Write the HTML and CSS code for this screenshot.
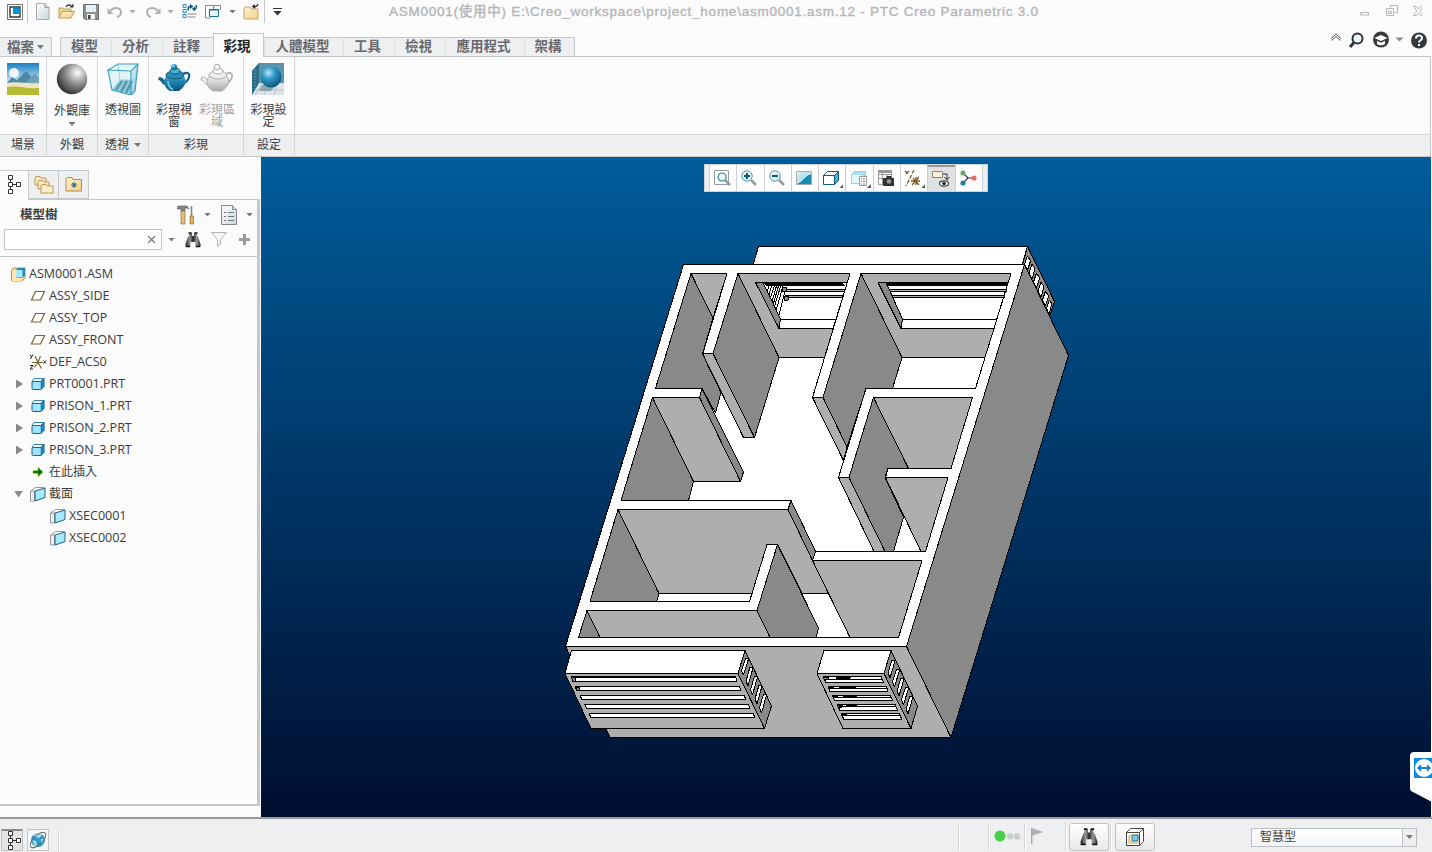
FILE: index.html
```html
<!DOCTYPE html>
<html lang="zh-Hant">
<head>
<meta charset="utf-8">
<title>ASM0001 - PTC Creo Parametric 3.0</title>
<link rel="stylesheet" href="styles.css">
</head>
<body>
<svg class="defs" width="0" height="0" aria-hidden="true">
  <defs>
    <linearGradient id="gFolder" x1="0" y1="0" x2="1" y2="1"><stop offset="0" stop-color="#fff3cf"/><stop offset="1" stop-color="#f3cf8a"/></linearGradient>
    <linearGradient id="gSteel" x1="0" y1="0" x2="1" y2="1"><stop offset="0" stop-color="#fff"/><stop offset="1" stop-color="#c9d8de"/></linearGradient>
    <linearGradient id="gBin" x1="0" x2="1"><stop offset="0" stop-color="#222"/><stop offset=".3" stop-color="#999"/><stop offset=".5" stop-color="#222"/><stop offset=".75" stop-color="#999"/><stop offset="1" stop-color="#222"/></linearGradient>
    <linearGradient id="gGlass" x1="0" y1="0" x2="1" y2="1"><stop offset="0" stop-color="#e8f7fb"/><stop offset="1" stop-color="#72bfd6"/></linearGradient>
    <linearGradient id="gSky" x1="0" y1="0" x2="0" y2="1"><stop offset="0" stop-color="#1a7dc2"/><stop offset=".6" stop-color="#cbe9f7"/></linearGradient>
    <radialGradient id="gBall" cx=".68" cy=".3" r=".75"><stop offset="0" stop-color="#fff"/><stop offset=".5" stop-color="#8d8d8d"/><stop offset="1" stop-color="#333"/></radialGradient>
    <radialGradient id="gBlue" cx=".38" cy=".3" r=".75"><stop offset="0" stop-color="#b8e8fa"/><stop offset=".4" stop-color="#2e9ac9"/><stop offset="1" stop-color="#0b4f73"/></radialGradient>
    <linearGradient id="gPot" x1="0" y1="0" x2="0" y2="1"><stop offset="0" stop-color="#4fb2d8"/><stop offset=".5" stop-color="#1c7eaa"/><stop offset="1" stop-color="#0b5478"/></linearGradient>
    <linearGradient id="gPotG" x1="0" y1="0" x2="0" y2="1"><stop offset="0" stop-color="#fff"/><stop offset=".5" stop-color="#d4d4d4"/><stop offset="1" stop-color="#a8a8a8"/></linearGradient>
    <symbol id="tree" viewBox="0 0 16 20"><path d="M4.500 5v2M4.500 12v2M7 9.500h3" stroke="#333" fill="none"/><path d="M2.500 .5h4v4h-4zM2.500 7.500h4v4h-4zM2.500 14.500h4v4h-4zM10.500 7.500h4v4h-4z" fill="#fff" stroke="#333"/></symbol>
    <symbol id="bino" viewBox="0 0 16 16"><path d="M4 1h3v3h2V1h3v3l1 1 2.500 7v3h-5v-5h-5v5h-5v-3L3 5l1-1z" fill="url(#gBin)"/><path d="M3.500 1h3M9.500 1h3M1 14.500h4M11 14.500h4" stroke="#111" stroke-width="1.500"/></symbol>
    <symbol id="part" viewBox="0 0 14 14"><path d="M1 4.500l2-3h10l-3 3z" fill="#fff" stroke="#3584a4"/><path d="M10 4.500l3-3v8l-3 3z" fill="#1e92d6" stroke="#0f5c82"/><rect x="1" y="4.500" width="9.300" height="8" rx="1.200" fill="#9fe5ff" stroke="#1c6385"/></symbol>
    <symbol id="plane" viewBox="0 0 16 12"><path d="M5.500 1.500h9l-4 8.500h-9z" fill="#fff" stroke="#7b642e" stroke-width="1.200"/></symbol>
    <symbol id="section" viewBox="0 0 18 16"><path d="M1.500 5l5-3.500h9" fill="none" stroke="#999"/><path d="M1.500 5h4v10h-4z" fill="#eee" stroke="#999"/><path d="M6 5l10-3v9.500L6 15z" fill="#a5e9fc" stroke="#20637e"/></symbol>
    <symbol id="folder" viewBox="0 0 18 15"><path d="M1 13.500V3.500l1-1.500h5l1 1.500h7.500v10z" fill="url(#gFolder)" stroke="#b99555"/></symbol>
  </defs>
</svg>

<header class="titlebar">
  <div class="quick">
    <svg class="q-logo" width="16" height="16" viewBox="0 0 16 16"><path d="M.5.5h15v15H.5z" fill="#fff" stroke="#777"/><path d="M3 3h10v10H3z" fill="#fff" stroke="#333" stroke-width="1.400"/><path d="M6 3.500h6.500V10H6z" fill="#0096dc"/></svg>
    <i class="vsep"></i>
    <svg class="q-new" width="14" height="17" viewBox="0 0 14 17"><path d="M.5.5h8.500l4 4v12H.5z" fill="url(#gSteel)" stroke="#a5aaae"/><path d="M9 .5v4h4" fill="#ddd" stroke="#999"/></svg>
    <svg class="q-open" width="17" height="17" viewBox="0 0 17 17"><path d="M1 15V5h4l1 1h7v3" fill="#f5d590" stroke="#c39c59"/><path d="M1 15l3-6.500h12.500L13 15z" fill="url(#gFolder)" stroke="#c39c59"/><path d="M8 4c1-2 3-2.500 5-1.500" fill="none" stroke="#333" stroke-width="1.500"/><path d="M11.500 4.500h4V.5z" fill="#333"/></svg>
    <svg class="q-save" width="16" height="16" viewBox="0 0 16 16"><path d="M.5.5h15v15H2l-1.500-1.500z" fill="#8b8e91" stroke="#6c6f72"/><path d="M3 1h10v7H3z" fill="#e3f0f5"/><path d="M4 10h8v5.500H4z" fill="#f2f2f2"/><path d="M5 11h2.500v4H5z" fill="#444"/></svg>
    <svg class="q-undo" width="16" height="13" viewBox="0 0 16 13"><path d="M3 6c4-5 11-3 11 1 0 2-1 4-4 5" fill="none" stroke="#b1b1b1" stroke-width="2"/><path d="M.5 3v6h6z" fill="#b1b1b1"/></svg>
    <i class="caret light q-c1"></i>
    <svg class="q-redo" width="16" height="13" viewBox="0 0 16 13"><path d="M13 6C9 1 2 3 2 7c0 2 1 4 4 5" fill="none" stroke="#b1b1b1" stroke-width="2"/><path d="M15.500 3v6h-6z" fill="#b1b1b1"/></svg>
    <i class="caret light q-c2"></i>
    <svg class="q-regen" width="16" height="17" viewBox="0 0 16 17"><path d="M1 1.500h3v3H1zM1 6.500h3v3H1zM1 11.500h3v3H1z" fill="#fff" stroke="#258fba"/><path d="M5.500 11h9M5.500 14h8" stroke="#888" stroke-width="1.200"/><path d="M6.500 7.500c-1-3 0-4 2-4M14 2c1 3 0 4-2 4" fill="none" stroke="#115a7b" stroke-width="1.500"/><path d="M8 1l3.500 2.500L8 6zM13 3.500L9.800 6 13 8.500z" fill="#115a7b"/></svg>
    <svg class="q-win" width="17" height="16" viewBox="0 0 17 16"><path d="M.5 10V1.500h8V5M9 3.500V1.500h6.500V6M.5 9.500V14h5" fill="#fff" stroke="#888"/><path d="M4.500 5.500h9v7h-9z" fill="#e9f9ff" stroke="#126d91"/><path d="M4 6h10" stroke="#126d91"/></svg>
    <i class="caret q-c3"></i>
    <svg class="q-close" width="17" height="17" viewBox="0 0 17 17"><path d="M1 16V5.500L2 4h5l1 2h7v10z" fill="url(#gFolder)" stroke="#c9a766"/><path d="M15 1c-1 3-3 3-4 3" fill="none" stroke="#333" stroke-width="1.300"/><path d="M12 1v5L8.500 3.500z" fill="#333"/></svg>
    <i class="vsep"></i>
    <svg class="q-more" width="9" height="8" viewBox="0 0 9 8"><path d="M0 .5h9" stroke="#333"/><path d="M.5 3h8l-4 4.500z" fill="#333"/></svg>
  </div>
  <h1 class="title">ASM0001(使用中) E:\Creo_workspace\project_home\asm0001.asm.12 - PTC Creo Parametric 3.0</h1>
  <svg class="winctl" width="62" height="14" viewBox="0 0 62 14" fill="none" stroke="#b5b8bb"><path d="M.5 7.500h8v2.500h-8zM30.500 3.500V.5h7v7h-3M26.500 3.500h7v7h-7zM28.500 6.500h3v2h-3z"/><path d="M53.500 1.500h3l2 2.500 2-2.500h3l-3.500 4.500 3.500 4.500h-3l-2-2.500-2 2.500h-3l3.500-4.500z"/></svg>
</header>

<nav class="tabs">
  <span class="tab file">檔案<i class="caret small"></i></span>
  <span class="tab first">模型</span><span class="tab">分析</span><span class="tab">註釋</span><span class="tab active">彩現</span><span class="tab wide">人體模型</span><span class="tab">工具</span><span class="tab">檢視</span><span class="tab wide">應用程式</span><span class="tab last">架構</span>
  <svg class="navtools" width="100" height="20" viewBox="0 0 100 20"><path d="M1 8.500l5-4.500 5 4.500M1.500 10.500L6 6.500l4.500 4" fill="none" stroke="#555"/><circle cx="27.500" cy="8.500" r="5" fill="#eef7fb" stroke="#333" stroke-width="2"/><path d="M24 12.500l-4 4.500" stroke="#333" stroke-width="3"/><circle cx="51" cy="9.500" r="8" fill="#343a3e"/><path d="M44.500 8l6.500-3 6.500 3-6.500 3zM47 10.800v3c2 2 6 2 8 0v-3l-4 2z" fill="#fff"/><path d="M65.500 7.500h8l-4 4z" fill="#888"/><circle cx="89" cy="10.500" r="8" fill="#343a3e"/><path d="M86 8.500c0-4 6-4 6-.5 0 2.500-3 2-3 4.500M89 14v2" fill="none" stroke="#fff" stroke-width="2"/></svg>
</nav>

<section class="ribbon">
  <div class="group g1"><div class="tools"><div class="tool">
    <svg width="32" height="32" viewBox="0 0 32 32"><path fill="url(#gSky)" d="M0 0h32v32H0z"/><circle cx="7" cy="10" r="5" fill="#fff" opacity=".85"/><path d="M0 20l5-6 5 3 9-9 6 6 3-3 4 4v8H0z" fill="#5089a5"/><path d="M18 20l9-9 5 4v7z" fill="#6fa2ba"/><path d="M0 20c10-2 20 1 32 0v12H0z" fill="#eee6c4"/><path d="M0 24c12-2 18 2 32 1v7H0z" fill="#b5bc33"/></svg>
    <span>場景</span></div></div><div class="caption">場景</div></div>
  <div class="group g2"><div class="tools"><div class="tool">
    <svg width="32" height="32" viewBox="0 0 32 32"><circle cx="16" cy="16" r="15.200" fill="url(#gBall)"/></svg>
    <span>外觀庫</span><i class="caret"></i></div></div><div class="caption">外觀</div></div>
  <div class="group g3"><div class="tools"><div class="tool">
    <svg width="32" height="32" viewBox="0 0 32 32"><path d="M1 7l10-6h20l-3 27-4 4L5 27z" fill="#e3f4f9"/><path d="M13 17h16l-5 14L5 27z" fill="#8fc6d6"/><path d="M24 8l7-7-3 27-4 4z" fill="url(#gGlass)"/><path d="M15 18l-6 9M20 18l-6 11M25 18l-6 12" stroke="#4f94ab" stroke-width="2"/><path d="M11 1l2 16h16M13 17L5 27" fill="none" stroke="#9fcfdd"/><path d="M1 7l23 1 7-7H11zM1 7l4 20 19 5V8M31 1l-3 27-4 4" fill="none" stroke="#3b9fbd" stroke-width="1.200"/></svg>
    <span>透視圖</span></div></div><div class="caption">透視<i class="caret"></i></div></div>
  <div class="group g4"><div class="tools"><div class="tool">
    <svg width="34" height="32" viewBox="0 0 34 32"><path d="M26 11c10-5 7 10-3 10" fill="none" stroke="#17658a" stroke-width="2.200"/><path d="M9 22C4 22 5 17 1 17l1-3c5 0 4 4 8 3z" fill="#17678e"/><path d="M8 15c2-5 17-5 20 0 2 6-2 10-6 13h-9C8 25 6 20 8 15z" fill="url(#gPot)"/><ellipse cx="18" cy="12" rx="9" ry="4" fill="#268ab5" stroke="#0d5475"/><ellipse cx="18" cy="8" rx="5" ry="3" fill="#4faed2" stroke="#10597c"/><circle cx="17" cy="4" r="3" fill="url(#gBlue)"/><path d="M11 18c0 4 2 7 5 9" stroke="#6bc3e2" stroke-width="2" fill="none"/></svg>
    <span>彩現視<br>窗</span></div><div class="tool off">
    <svg width="34" height="32" viewBox="0 0 34 32"><path d="M26 11c10-5 7 10-3 10" fill="none" stroke="#b3b3b3" stroke-width="1.800"/><path d="M9 22C4 22 5 17 1 17l1-3c5 0 4 4 8 3z" fill="#eee" stroke="#aaa"/><path d="M8 15c2-5 17-5 20 0 2 6-2 10-6 13h-9C8 25 6 20 8 15z" fill="url(#gPotG)" stroke="#aaa"/><ellipse cx="18" cy="12" rx="9" ry="4" fill="#eee" stroke="#aaa"/><ellipse cx="18" cy="8" rx="5" ry="3" fill="#fafafa" stroke="#aaa"/><circle cx="17" cy="4" r="2.800" fill="#fff" stroke="#aaa"/></svg>
    <span>彩現區<br>域</span></div></div><div class="caption">彩現</div></div>
  <div class="group g5"><div class="tools"><div class="tool">
    <svg width="32" height="32" viewBox="0 0 32 32"><path d="M7 0h25v22H7L0 32V8z" fill="#5791a8"/><path d="M7 20h25v12H0z" fill="#dfe5e7"/><path d="M0 8l7-8v20L0 32z" fill="#2f6e89"/><path d="M9 3h22M8 7h22M9 11h22M8 15h22M3 7v20" stroke="#7db0c2" stroke-dasharray="1 2"/><path d="M10 21L3 32M17 21l-5 11M25 21l-3 11M3 27h29" stroke="#b3c2c8"/><path d="M10 22h14l-5 6H7z" fill="#8fa5ae"/><circle cx="19" cy="14" r="10.500" fill="url(#gBlue)"/></svg>
    <span>彩現設<br>定</span></div></div><div class="caption">設定</div></div>
  <div class="rest"><div></div><div class="caption"></div></div>
</section>

<main class="work">
  <aside class="side">
    <div class="sidetabs">
      <span class="st on"><svg width="16" height="20"><use href="#tree"/></svg></span>
      <span class="st"><svg width="20" height="20" viewBox="0 0 20 20"><g stroke="#b28a48" stroke-width=".9" fill="#ffeabf"><path d="M1 10V3l1-1.500h4L7 3h5v7z"/><path d="M4 14V7l1-1.500h4L10 7h5v7z"/><path d="M7 18v-7l1-1.500h4l1 1.500h6v7z" fill="#fff0cd"/></g></svg></span>
      <span class="st"><svg width="18" height="17" viewBox="0 0 18 17"><path d="M1 15V3l1-1.500h5L8 3.500h8.500V15z" fill="url(#gFolder)" stroke="#b28a48"/><path d="M9 6v6M6 9h6M7 7l4 4M11 7l-4 4" stroke="#135f78" stroke-width=".9"/></svg></span>
    </div>
    <div class="panel">
      <div class="phead"><b>模型樹</b>
        <svg width="18" height="20" viewBox="0 0 18 20"><path d="M1 1h9l2 3-2-1H8v3H4V4H0z" fill="#888" stroke="#555" stroke-width=".6"/><path d="M4 6h4v13H4z" fill="#e5c07d" stroke="#80602a" stroke-width=".6"/><path d="M14.500 1v10" stroke="#888" stroke-width="1.600"/><path d="M13 11h3.500v8H13z" fill="#e2b35a" stroke="#80602a" stroke-width=".6"/></svg>
        <i class="caret"></i>
        <svg width="16" height="20" viewBox="0 0 16 20"><path d="M.5.5h11l4 4v15H.5z" fill="url(#gSteel)" stroke="#84898c"/><path d="M11.500.5v4h4" fill="#cfdbe0" stroke="#84898c"/><path d="M7 7.500h6M7 11.500h6M7 15.500h6M3 7.500h2M3 11.500h2M3 15.500h2" stroke="#777"/></svg>
        <i class="caret c2"></i>
      </div>
      <div class="search">
        <div class="field"><svg width="9" height="9" viewBox="0 0 9 9"><path d="M1 1l7 7M8 1L1 8" stroke="#777" stroke-width="1.200"/></svg></div>
        <i class="caret"></i>
        <svg class="s-b" width="16" height="16"><use href="#bino"/></svg>
        <svg class="s-f" width="16" height="15" viewBox="0 0 16 15"><path d="M.5.5h15l-6 7V12L6.500 14.500v-7z" fill="#f7f7f7" stroke="#b0b3b5"/></svg>
        <svg class="s-p" width="11" height="11" viewBox="0 0 11 11"><path d="M5.500 0v11M0 5.500h11" stroke="#9a9a9a" stroke-width="3"/></svg>
      </div>
      <ul class="treelist">
        <li class="l0"><svg width="15" height="15" viewBox="0 0 15 15"><path d="M.5 3l2-2h11.500v10l-3 3H.5z" fill="#f6cf86" stroke="#b8965a"/><path d="M1 3h4v8h6v3H1z" fill="#ffe6b0"/><path d="M5 3l2-2h7v7.500l-2.500 2H5z" fill="#2089b4"/><path d="M5 3h6.500v7H5z" fill="#a9ecff"/></svg>ASM0001.ASM</li>
        <li class="l1"><svg width="16" height="12"><use href="#plane"/></svg>ASSY_SIDE</li>
        <li class="l1"><svg width="16" height="12"><use href="#plane"/></svg>ASSY_TOP</li>
        <li class="l1"><svg width="16" height="12"><use href="#plane"/></svg>ASSY_FRONT</li>
        <li class="l1"><svg width="18" height="16" viewBox="0 0 18 16"><path d="M2 8.500h11M8 8.500l-4 5M8 8.500l3.500 6M5 2l3 6.500L10.500 2" stroke="#7b6330" stroke-width="1.200" fill="none"/><path d="M0 .5l1.500 2.500L3 .5M1.500 3L.5 5M13.500 6.500l2.500 3M16 6.500l-2.500 3M0 11.500h3L0 15h3" stroke="#222" fill="none"/></svg>DEF_ACS0</li>
        <li class="l1 t"><i class="tri"></i><svg width="14" height="14"><use href="#part"/></svg>PRT0001.PRT</li>
        <li class="l1 t"><i class="tri"></i><svg width="14" height="14"><use href="#part"/></svg>PRISON_1.PRT</li>
        <li class="l1 t"><i class="tri"></i><svg width="14" height="14"><use href="#part"/></svg>PRISON_2.PRT</li>
        <li class="l1 t"><i class="tri"></i><svg width="14" height="14"><use href="#part"/></svg>PRISON_3.PRT</li>
        <li class="l1 cjk"><svg width="16" height="12" viewBox="0 0 16 12"><path d="M3 4.500h5V1l5 5-5 5V7.500H3z" fill="#08700d" stroke="#b7d313" stroke-width=".6"/></svg>在此插入</li>
        <li class="l1 t cjk"><i class="tri open"></i><svg class="sec" width="18" height="16"><use href="#section"/></svg>截面</li>
        <li class="l2"><svg width="18" height="16"><use href="#section"/></svg>XSEC0001</li>
        <li class="l2"><svg width="18" height="16"><use href="#section"/></svg>XSEC0002</li>
      </ul>
    </div>
  </aside>

  <div class="canvas">
    <svg class="model" width="1170" height="660" viewBox="261 157 1170 660" shape-rendering="crispEdges">
      <g stroke="#000" stroke-width="1" stroke-linejoin="bevel">
        <!-- outer shell -->
        <path class="w" d="M758.500 246.500H1027.500L1022 265H753z"/>
        <path class="d" d="M1027.500 246.500L1054.500 301.500L1049.500 316L1022.500 265z"/>
        <path class="w" d="M1027.500 256l3 5-3 9-3-6zM1032 264l3 5-3 10-3-6zM1036.500 273l3 5-3 10-3-6zM1041 282l3 5-3 10-3-6zM1045.500 291l3 5-3 10-3-6zM1049.500 300l2.500 4-3 10-2.500-6z"/>
        <path class="w" d="M683.500 264.500H1024.500L906.500 646.500H565.500z"/>
        <path class="d" d="M1024.500 264.500L1068.500 355.500L951 737.500L906.500 646.500z"/>
        <path class="l" d="M565.500 646.500H906.500L951 737.500H610z"/>
        <!-- upper-left room -->
        <path class="d" d="M691 273.500L713 318L702.500 354L721 392.500L715.500 413L702 388.500H655.500z"/>
        <path class="l" d="M691 273.500H727L713 318z"/>
        <path class="w" d="M655.500 388.500H702L699.500 397.500H652.500M652.500 397.500"/>
        <path class="d" d="M702 388.500L743.500 472L740.500 481.500L699.500 397.500z"/>
        <path class="l" d="M652.500 397.500H699.500L740.500 481.500H693.500z"/>
        <path class="d" d="M652.500 397.500L693.500 481.500L688.500 500.500H621z"/>
        <!-- partition and middle room -->
        <path class="w" d="M727 273.500L702.500 354.500H713L738 273.500"/>
        <path class="l" d="M702.500 353.500H713L754.500 437.500H743.500z"/>
        <path class="l" d="M738 273.500H850L824.500 357.500H779z"/>
        <path class="d" d="M738 273.500L779 357.500L754.500 437.500L713 353.500z"/>
        <path class="w" d="M755.500 282.500H847.500L833 328.500H779z"/>
        <path class="l" d="M782 289.500H844.500V291.500H782zM785 295.500H842.500V297.500H785z"/>
        <path class="d" d="M755.500 282.500H763L780.500 319L779 328.500z"/>
        <path class="n" d="M780.500 319.500H836"/>
        <path class="k" d="M764 283H843L845 286H766z"/>
        <path class="n" d="M770 284l-3 7M775 284l-5 15M779 284l-6 21M783 286l-7 25M785 291l-6 24M772 284l-3 11M777 284l-5 18M781 285l-7 23"/>
        <path class="d" d="M782 287h4v4h-4zM784 296h4v4h-4z"/>
        <!-- upper-right room -->
        <path class="w" d="M850 273.500L812.500 397.500H823.500L861 273.500"/>
        <path class="l" d="M812.500 397.500H823L847 447L843.500 460.500z"/>
        <path class="l" d="M861 273.500H1011L985 357.500H902z"/>
        <path class="w" d="M902 357.500H985L975.500 388.500H892.500z"/>
        <path class="d" d="M861 273.500L902 357.500L892.500 388.500H866L847 447L823 397.500z"/>
        <path class="w" d="M878 282.500H1008L994 328.500H901z"/>
        <path class="l" d="M888 289.500H1006V291.500H889zM891 295.500H1004V297.500H892z"/>
        <path class="d" d="M878 282.500H886L902.500 319L901 328.500z"/>
        <path class="n" d="M902.500 319.500H997"/>
        <path class="k" d="M886 283H1008L1007 286H887z"/>
        <!-- right rooms -->
        <path class="w" d="M975.500 388.500H866L838.500 477.500H849L873.500 397.500H972.500"/>
        <path class="d" d="M873.500 397.500L908.500 468.500H888L885 477.500L903.500 517L893.500 551.500H885L849 477.500z"/>
        <path class="l" d="M838.500 477.500H849L885 551.500H874z"/>
        <path class="l" d="M873.500 397.500H972.500L951 468.500H908.500z"/>
        <path class="w" d="M951 468.500H888L885.500 477.500H948"/>
        <path class="l" d="M885.500 477.500H948L925.500 551.500H921z"/>
        <path class="w" d="M925.500 551.500H815.500L812.500 560.500H922"/>
        <!-- large lower-left room -->
        <path class="n" d="M621 500.500H791"/>
        <path class="l" d="M618 509.500H788L828.500 593.500H802L777.500 544.500H767L752 593.500H659z"/>
        <path class="d" d="M791 500.500L815.500 551.500L812.500 560.500L788 509.500z"/>
        <path class="d" d="M618 509.500L659 593.500L656.500 601.500H590z"/>
        <path class="w" d="M659 593.500H752L749.500 601.500H656.500z"/>
        <path class="n" d="M777.500 544.500H767L749.500 601.500H590M587 610.500H757"/>
        <path class="l" d="M812.500 560.500H922L898.500 637.500H850z"/>
        <path class="d" d="M777.500 544.500L818.500 628L816 637.500H770L757 610.500z"/>
        <path class="l" d="M587 610.500H757L770 637.500H600z"/>
        <path class="d" d="M587 610.500L600 637.500H578.500z"/>
        <path class="n" d="M578.500 637.500H898.500"/>
        <!-- left window grille -->
        <path class="l" d="M565 673.500H738L764.500 728.500H591z"/>
        <path class="d" d="M745 650.500L771.500 706L764.500 728.500L738 673.500z"/>
        <path class="w" d="M571.500 650.500H745L738 673.500H565z"/>
        <g class="w">
          <path d="M571 676.500H735.500L737 681.500H573zM575 686.500H739.500L741 690.500H577zM580 695.500H744L746 699.500H582zM584.500 704.500H748.500L750 708.500H587zM589 713.500H753L755 717.500H591z"/>
          <path d="M745.500 658l3 1-5 16-2-4zM750 667l3 1-5 18-2-5zM754.500 676l3 1-5 18-2-5zM759 685l3 1-5 18-2-5zM763.500 694l3 1-5 18-2-5z"/>
        </g>
        <path class="n" d="M571 677.500H736"/>
        <path class="d" d="M571 677h4l1 4h-3zM576 687h3l1 3h-3z"/>
        <!-- right window grille -->
        <path class="l" d="M817 673.500H884L911 728.500H843z"/>
        <path class="d" d="M891 650.500L917.500 706L911 728.500L884 673.500z"/>
        <path class="w" d="M824 650.500H891L884 673.500H817z"/>
        <g class="w">
          <path d="M823 676.500H881L883.500 682.500H826zM828 686.500H886L888 691.500H830zM832 695.500H890L893 700.500H835zM837 704.500H895L897.500 710.500H840zM841 713.500H899L902 719.500H844z"/>
          <path d="M892 660l3 1-5 17-2-5zM896.500 669l3 1-5 17-2-5zM901 678l3 1-5 17-2-5zM905.500 687l3 1-5 17-2-5zM910 696l3 1-5 17-2-5z"/>
        </g>
        <path class="d" d="M823 677h5v2h-4zM836 677h14v1h-14zM828 687h5v1h-4zM839 687h16v1h-16zM832 696h5v1h-4zM843 696h13v1h-13zM837 705h5v2h-4zM846 705h10v1h-10zM841 714h5v1h-4z"/>
        <path class="n" d="M826 679.500H883M830 688.500H888M835 697.500H892M839 706.500H896M844 715.500H900"/>
      </g>
    </svg>
    <div class="viewbar">
      <span><svg width="20" height="18" viewBox="0 0 20 18"><path d="M2.500 1.500h14v14h-14z" fill="#fff" stroke="#999"/><circle cx="10" cy="8" r="4" fill="#eaf9ff" stroke="#27809b" stroke-width="1.200"/><path d="M13 11l5 5" stroke="#999" stroke-width="2.500"/></svg></span>
      <span><svg width="18" height="18" viewBox="0 0 18 18"><circle cx="7" cy="7" r="5.200" fill="#eaf9ff" stroke="#4a93ab"/><path d="M4 7h6M7 4v6" stroke="#075a79" stroke-width="2"/><path d="M11 11l5 5" stroke="#999" stroke-width="2.500"/></svg></span>
      <span><svg width="18" height="18" viewBox="0 0 18 18"><circle cx="7" cy="7" r="5.200" fill="#eaf9ff" stroke="#4a93ab"/><path d="M4 7h6" stroke="#075a79" stroke-width="2"/><path d="M11 11l5 5" stroke="#999" stroke-width="2.500"/></svg></span>
      <span><svg width="18" height="18" viewBox="0 0 18 18"><path d="M1.500 2.500h15v13h-15z" fill="url(#gGlass)" stroke="#aaa"/><path d="M2 15c6-3 7-8 14-10v10z" fill="#178bb0"/><path d="M2 14c6-2 8-8 14-10" stroke="#fff" fill="none"/></svg></span>
      <span class="more"><svg width="18" height="18" viewBox="0 0 18 18"><path d="M1.500 6.500h11v9h-11zM1.500 6.500l4-4h11l-4 4z" fill="#fff" stroke="#0e5c7b"/><path d="M12.500 6.500l4-4v9l-4 4z" fill="#49b0d3" stroke="#0e5c7b"/></svg></span>
      <span class="more"><svg width="18" height="18" viewBox="0 0 18 18"><path d="M1.500 5.500l3-3h11v9l-3 3h-11z" fill="#a8e3f5" stroke="#a9c8d2"/><path d="M2 6h10v8H2z" fill="#e4f8ff"/><path d="M9.500 7.500h7v9h-7z" fill="#fff" stroke="#999"/><path d="M11 10h1M13 10h2M11 12.500h1M13 12.500h2M11 15h1M13 15h2" stroke="#777"/></svg></span>
      <span><svg width="18" height="18" viewBox="0 0 18 18"><path d="M1.500 1.500h13v14h-13zM1.500 5.500h13M1.500 9.500h13M5.500 1.500v14M10 5v10" fill="#fff" stroke="#999"/><path d="M1 1h14v3H1z" fill="#999"/><path d="M6 9h3l1-2h4l1 2h2v8H6z" fill="#333"/><circle cx="12" cy="12.500" r="2.300" fill="#999"/></svg></span>
      <span class="more"><svg width="20" height="18" viewBox="0 0 20 18" stroke="#7b5b28" stroke-width="1.300" fill="none"><path d="M2 2l4 4M6 2L2 6M11 1L3 17" stroke-dasharray="4 1.500"/><path d="M13 8v8M8 12h9M9 16l7-8M10 9l6 7"/></svg></span>
      <span class="pressed"><svg width="20" height="18" viewBox="0 0 20 18"><path d="M1.500 1.500h10v6h-10z" fill="#fff1cf" stroke="#888"/><path d="M12 4h4v5M13.500 7l2.500 3 2.500-3" fill="none" stroke="#333"/><ellipse cx="13" cy="13.500" rx="4.500" ry="2.700" fill="#fff" stroke="#444" stroke-width="1.200"/><circle cx="13" cy="13.500" r="1.800" fill="#222"/></svg></span>
      <span><svg width="18" height="18" viewBox="0 0 18 18"><path d="M4 4l5 5h6M9 9l-5 5" fill="none" stroke="#333" stroke-width="1.200"/><circle cx="4" cy="4" r="2.600" fill="#67a66b"/><circle cx="15" cy="9" r="2.600" fill="#e36c6c"/><circle cx="4" cy="14" r="2.600" fill="#277da0"/></svg></span>
    </div>
    <svg class="viewer" width="22" height="50" viewBox="0 0 22 50"><path d="M22 0H4Q0 0 0 4V36Q0 39 3 40L22 50z" fill="#fff"/><path d="M4 6h18v20H4z" fill="#0a8be4"/><circle cx="14" cy="16" r="9" fill="#fff"/><path d="M7 16l4-4v3h6v-3l4 4-4 4v-3h-6v3z" fill="#1681dc"/></svg>
  </div>
</main>

<footer class="status">
  <span class="sb press"><svg width="16" height="20"><use href="#tree"/></svg></span>
  <span class="sb globe"><svg width="18" height="18" viewBox="0 0 18 18"><circle cx="9" cy="9" r="7" fill="#2e9ac9"/><path d="M4 4c3-3 8-2 9 0l-3 3-4-1zM3 9l4 1 1 4-2 1zM12 8l3 0-1 4-2 1z" fill="#a9def2"/><ellipse cx="9" cy="9" rx="10" ry="4.500" transform="rotate(-45 9 9)" fill="none" stroke="#666"/></svg></span>
  <i class="line a"></i><i class="line b"></i><i class="line c"></i>
  <svg class="lights" width="27" height="12" viewBox="0 0 27 12"><circle cx="6" cy="6" r="5.500" fill="#48ce48"/><circle cx="16" cy="6.500" r="3.200" fill="#ccc"/><circle cx="23" cy="6.500" r="3.200" fill="#ccc"/></svg>
  <i class="line d"></i>
  <svg class="flag" width="13" height="16" viewBox="0 0 13 16"><path d="M.7 0v16" stroke="#aaa" stroke-width="1.500"/><path d="M1 0l11 4L1 8z" fill="#b2b2b2"/></svg>
  <i class="line e"></i>
  <span class="btn"><svg width="18" height="18"><use href="#bino"/></svg></span>
  <i class="line f"></i>
  <span class="btn"><svg width="20" height="20" viewBox="0 0 20 20"><path d="M1.500 5.500h13v13h-13zM1.500 5.500l4-4h13v13l-4 4M14.500 5.500l4-4" fill="#fff" stroke="#444"/><path d="M4 9l2-1h7v8H4z" fill="#ffe7b5" stroke="#c9a260"/><path d="M7 9l1-1h5v5l-1 1H7z" fill="#79cbe9" stroke="#267da3"/></svg></span>
  <div class="select"><span>智慧型</span><b><i class="caret"></i></b></div>
</footer>
</body>
</html>
```

FILE: styles.css
```css
* { box-sizing: border-box; }
body {
  margin: 0;
  width: 1432px;
  height: 852px;
  overflow: hidden;
  background: #fbfbfb;
  color: #3c3c3c;
  font: 12px/18px "Liberation Sans", "Noto Sans CJK TC", sans-serif;
  display: flex;
  flex-direction: column;
}
svg { display: block; flex: none; }
.defs { position: absolute; }
.caret {
  flex: none;
  width: 7px;
  height: 4px;
  background: #777;
  clip-path: polygon(0 0, 100% 0, 50% 100%);
}
.caret.light { background: #aaa; }

/* title bar */
.titlebar { height: 33px; display: flex; align-items: flex-start; }
.quick { width: 389px; height: 23px; display: flex; align-items: center; padding-left: 7px; }
.vsep { width: 1px; height: 23px; background: #c9c9c9; margin-left: 4px; }
.q-new { margin-left: 8px; }
.q-open { margin-left: 8px; }
.q-save { margin-left: 8px; }
.q-undo { margin-left: 8px; }
.q-c1 { margin-left: 6px; }
.q-redo { margin-left: 9px; }
.q-c2 { margin-left: 6px; }
.q-regen { margin-left: 8px; }
.q-win { margin-left: 7px; }
.q-c3 { margin-left: 7px; }
.q-close { margin-left: 7px; }
.q-more { margin-left: 8px; }
.title {
  margin: 3px 0 0;
  width: 700px;
  white-space: nowrap;
  font: 13.5px/18px "Liberation Sans", "Noto Sans CJK TC", sans-serif;
  letter-spacing: .75px;
  color: #b3b5b7;
  -webkit-text-stroke: .35px #b3b5b7;
}
.winctl { margin: 5px 0 0 271px; }

/* tabs */
.tabs { height: 24px; display: flex; align-items: flex-end; border-bottom: 1px solid #c5c8cb; width: 1431px; }
.tab {
  width: 51px;
  height: 19px;
  padding-right: 3px;
  border: solid #c5c8cb;
  border-width: 1px 0 0;
  border-left: 1px solid #dfe1e3;
  background: #eeeff1;
  color: #68696f;
  font-weight: 700;
  font-size: 13.5px;
  line-height: 17px;
  text-align: center;
  white-space: nowrap;
}
.tab.file { width: 52px; border-left: 0; border-right: 1px solid #c5c8cb; margin-right: 8px; display: flex; align-items: center; padding: 0 0 0 7px; }
.tab.file .caret { margin-left: 3px; }
.tab.first { border-left-color: #c5c8cb; }
.tab.wide { width: 79px; }
.tab.wide + .tab { width: 51px; }
.tab.last { width: 52px; border-right: 1px solid #c5c8cb; }
.tab.active {
  height: 24px;
  margin-bottom: -1px;
  padding-top: 4px;
  border: 1px solid #c5c8cb;
  border-bottom: 0;
  background: #fbfbfb;
  color: #222;
}
.navtools { margin: 0 0 6px 755px; }

/* ribbon */
.ribbon { height: 100px; width: 1431px; display: flex; border-right: 1px solid #c5c8cb; }
.group, .rest { display: grid; grid-template-rows: 77px 23px; border-right: 1px solid #d4d6d8; }
.g1 { width: 47px; }
.g2, .g3, .g5 { width: 51px; }
.g4 { width: 95px; }
.rest { flex: 1; border: 0; }
.tools { display: flex; justify-content: space-evenly; padding-top: 6px; }
.g4 .tools, .g5 .tools { padding-right: 1px; }
.tool { display: flex; flex-direction: column; align-items: center; text-align: center; line-height: 12px; white-space: nowrap; }
.tool span { margin-top: 9px; }
.g2 .tool span { margin-top: 10px; }
.tool .caret { margin-top: 5px; }
.off { color: #a3a3a3; }
.caption {
  display: flex;
  align-items: center;
  justify-content: center;
  gap: 5px;
  padding-bottom: 1px;
  border-top: 1px solid #d4d6d8;
  border-bottom: 1px solid #c5c8cb;
  background: #eeeff1;
}

/* work area */
.work { height: 660px; display: flex; }
.side { width: 261px; padding-top: 13px; }
.sidetabs { height: 30px; display: flex; position: relative; }
.st {
  width: 30px;
  height: 29px;
  display: grid;
  place-items: center;
  background: #eeeff1;
  border: 1px solid #c8cbce;
  border-left: 0;
}
.st.on { width: 29px; height: 30px; background: #fbfbfb; border-bottom: 0; }
.st.on svg { margin-top: -2px; }
.panel { width: 260px; height: 607px; margin-top: -1px; border: solid #c5c8cb; border-width: 1px 3px 2px 0; }
.phead { height: 29px; display: flex; align-items: center; padding-left: 20px; }
.phead b { width: 157px; font-size: 12.5px; }
.phead .caret { margin: 0 10px 0 9px; }
.phead .c2 { margin: 0 0 0 9px; }
.search { height: 28px; display: flex; align-items: center; padding: 0 0 6px 4px; border-bottom: 1px solid #c5c8cb; }
.field { width: 158px; height: 21px; border: 1px solid #bfc4c8; background: #fff; display: flex; align-items: center; justify-content: flex-end; padding-right: 5px; }
.search .caret { margin-left: 6px; }
.s-b { margin-left: 10px; }
.s-f { margin-left: 10px; }
.s-p { margin-left: 12px; }
.treelist {
  list-style: none;
  margin: 0;
  padding: 6px 0 0;
  font: 12.6px/22px "Open Sans", "Noto Sans CJK TC", sans-serif;
}
.treelist li { height: 22px; display: flex; align-items: center; gap: 1px; padding-left: 30px; letter-spacing: -.05px; }
.treelist .l0 { padding-left: 11px; gap: 3px; }
.treelist .l1 { display: grid; grid-template-columns: 19px 1fr; gap: 0; }
.treelist .l1.t { grid-template-columns: 15px 18px 1fr; padding-left: 16px; }
.treelist .l1 .sec { margin-left: -2px; }
.treelist .l2 { padding-left: 49px; gap: 2px; }
.treelist li.cjk { font-size: 12px; letter-spacing: 0; }
.tri { width: 7px; height: 9px; background: #888; clip-path: polygon(0 0, 100% 50%, 0 100%); }
.tri.open { width: 9px; height: 7px; margin-left: -2px; clip-path: polygon(0 0, 100% 0, 50% 100%); }

/* graphics area */
.canvas { position: relative; width: 1170px; background: linear-gradient(#005c9b, #000e30); }
.w { fill: #fff; }
.l { fill: #aeaeae; }
.d { fill: #898989; }
.k { fill: #000; stroke: none; }
.n { fill: none; }
.viewbar {
  position: absolute;
  left: 443px;
  top: 7px;
  width: 284px;
  height: 28px;
  display: flex;
  padding: 0 4px;
  border: 1px solid #d0d3d6;
  background: #eeeff1;
}
.viewbar span { position: relative; flex: 1; display: grid; place-items: center; background: #fff; border-left: 1px solid #cdd0d3; }
.viewbar svg { margin-left: -2px; }
.viewbar span:last-child { border-right: 1px solid #cdd0d3; }
.viewbar .pressed { background: #dfe1e4; border-top: 2px solid #999; }
.viewbar .more::after {
  content: "";
  position: absolute;
  right: 2px;
  bottom: 3px;
  width: 4px;
  height: 4px;
  background: #555;
  clip-path: polygon(100% 0, 100% 100%, 0 100%);
}
.viewer { position: absolute; right: -1px; top: 595px; }

/* status bar */
.status { height: 35px; display: flex; align-items: center; border-top: 2px solid #999; background: #eeeff1; padding-left: 1px; }
.sb { width: 22px; height: 22px; margin: 9px 4px 0 0; display: grid; place-items: center; background: #f7f7f7; border: 1px solid #c3c6c9; }
.press { background: #e2e3e5; border-top: 2px solid #888; }
.press svg { margin-left: 3px; }
.line { width: 2px; height: 28px; background: linear-gradient(90deg, #d3d5d7 50%, #fff 50%); }
.a { margin-left: 5px; height: 22px; margin-top: 8px; }
.b { margin-left: 898px; }
.c { margin-left: 28px; }
.lights { margin: 0 0 0 4px; }
.d.line { margin-left: 3px; }
.flag { margin-left: 5px; }
.e { margin-left: 21px; }
.f { margin-left: 1px; }
.btn { width: 40px; height: 28px; margin: 3px 0 0 2px; display: grid; place-items: center; border: 1px solid #bfc3c6; border-radius: 3px; background: linear-gradient(#fff, #e7e8ea); }
.btn + .line + .btn { margin-left: 3px; }
.select { display: flex; margin: 3px 0 0 96px; width: 166px; height: 19px; border: 1px solid #bcc0c4; background: linear-gradient(#fff, #f3f4f5); }
.select span { flex: 1; padding-left: 8px; line-height: 17px; }
.select b { width: 14px; display: grid; place-items: center; border-left: 1px solid #bcc0c4; background: #eeeff1; }
```
